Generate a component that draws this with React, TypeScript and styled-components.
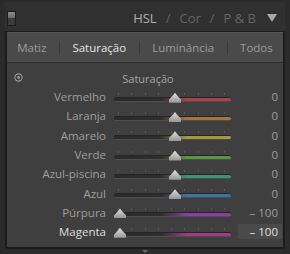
import styled, { createGlobalStyle } from "styled-components";

type rowType = {
  name: string,
  color: string,
  value: number,
  selected?: boolean
}

const rows: rowType[] = [
  { name: "Vermelho", color: "#a8424c", value: 0 },
  { name: "Laranja", color: "#a8743e", value: 0 },
  { name: "Amarelo", color: "#a39a3c", value: 0 },
  { name: "Verde", color: "#5a963e", value: 0 },
  { name: "Azul-piscina", color: "#3a9478", value: 0 },
  { name: "Azul", color: "#3a74a0", value: 0 },
  { name: "Púrpura", color: "#8c3ea0", value: -100 },
  { name: "Magenta", color: "#9c3e80", value: -100, selected: true },
];

const GlobalStyle = createGlobalStyle`
  body {
    margin: 0;
    background: #2b2b2b;
    font-family: "Open Sans", "DejaVu Sans", sans-serif;
  }
`;

const App = () => {
  return (
    <>
      <GlobalStyle />
      <Frame>
        <Header>
          <Switch />
          <Title>
            <Active>HSL</Active>
            <Sep>/</Sep>
            <span>Cor</span>
            <Sep>/</Sep>
            <span>P &amp; B</span>
            <Arrow />
          </Title>
        </Header>
        <Panel>
          <Tabs>
            <Tab>Matiz</Tab>
            <Divider />
            <Tab $active>Saturação</Tab>
            <Divider />
            <Tab>Luminância</Tab>
            <Divider />
            <Tab>Todos</Tab>
          </Tabs>
          <Content>
            <SectionHead>
              <Target>
                <svg width="9" height="9" viewBox="0 0 9 9">
                  <circle cx="4.5" cy="4.5" r="3.6" fill="none" stroke="#9a9a9a" strokeWidth="1.1" />
                  <circle cx="4.5" cy="4.5" r="1.4" fill="#9a9a9a" />
                </svg>
              </Target>
              <SectionTitle>Saturação</SectionTitle>
            </SectionHead>
            {rows.map((row) => (
              <Row key={row.name}>
                <Label $selected={row.selected}>{row.name}</Label>
                <Slider>
                  <Ticks>
                    {Array.from({ length: 9 }).map((_, i) => <Tick key={i} />)}
                  </Ticks>
                  <Track $color={row.color} />
                  <Thumb style={{ left: `${((row.value + 100) / 200) * 110}px` }} />
                </Slider>
                <Value $selected={row.selected}>
                  {row.value < 0 ? `– ${Math.abs(row.value)}` : row.value}
                </Value>
              </Row>
            ))}
          </Content>
        </Panel>
        <Footer>
          <FooterArrow />
        </Footer>
      </Frame>
    </>
  );
};

const Frame = styled.div`
  width: 290px;
  height: 254px;
  background: #2b2b2b;
  display: flex;
  flex-direction: column;
  overflow: hidden;
`;
const Header = styled.div`
  height: 29px;
  margin: 2px 5px 0;
  background: #303030;
  display: flex;
  align-items: center;
  justify-content: space-between;
  padding: 0 8px 0 2px;
`;
const Switch = styled.div`
  width: 7px;
  height: 13px;
  margin-top: 3px;
  border: 1px solid #1c1c1c;
  background: linear-gradient(#8a8a8a 0%, #6c6c6c 45%, #3c3c3c 50%, #3a3a3a 100%);
`;
const Title = styled.div`
  display: flex;
  align-items: center;
  gap: 7px;
  font-size: 13px;
  color: #646464;
  padding-top: 2px;
`;
const Active = styled.span`
  color: #b0b0b0;
`;
const Sep = styled.span`
  margin: 0 2px;
`;
const Arrow = styled.div`
  width: 0;
  height: 0;
  margin-left: 4px;
  border-left: 5px solid transparent;
  border-right: 5px solid transparent;
  border-top: 8px solid #a8a8a8;
`;
const Panel = styled.div`
  margin: 0 5px;
  border: 2px solid #1c1c1c;
  border-top: 1px solid #1c1c1c;
  height: 215px;
  background: #3f3f3f;
  display: flex;
  flex-direction: column;
`;
const Tabs = styled.div`
  height: 29px;
  background: #4a4a4a;
  border-top: 1px solid #555;
  border-bottom: 1px solid #2e2e2e;
  display: flex;
  align-items: center;
  justify-content: space-around;
  padding: 0 4px;
`;
const Tab = styled.div<{ $active?: boolean }>`
  font-size: 11.5px;
  color: ${(p) => (p.$active ? "#e4e4e4" : "#9c9c9c")};
`;
const Divider = styled.div`
  width: 1px;
  height: 14px;
  background: #393939;
`;
const Content = styled.div`
  display: flex;
  flex-direction: column;
  padding-top: 7px;
`;
const SectionHead = styled.div`
  position: relative;
  height: 17px;
  display: flex;
  align-items: center;
  justify-content: center;
`;
const Target = styled.div`
  position: absolute;
  left: 7px;
  top: 3px;
  display: flex;
`;
const SectionTitle = styled.div`
  font-size: 11px;
  color: #a4a4a4;
  margin-left: 6px;
`;
const Row = styled.div`
  height: 19.3px;
  display: flex;
  align-items: center;
`;
const Label = styled.div<{ $selected?: boolean }>`
  width: 99px;
  text-align: right;
  font-size: 11.5px;
  color: ${(p) => (p.$selected ? "#dedede" : "#9e9e9e")};
`;
const Slider = styled.div`
  position: relative;
  width: 117px;
  height: 14px;
  margin-left: 8px;
`;
const Ticks = styled.div`
  position: absolute;
  left: 4px;
  right: 6px;
  top: 3px;
  display: flex;
  justify-content: space-between;
`;
const Tick = styled.div`
  width: 1px;
  height: 2px;
  background: #585858;
`;
const Track = styled.div<{ $color: string }>`
  position: absolute;
  left: 0;
  right: 0;
  top: 8px;
  height: 3px;
  border-radius: 2px;
  background: linear-gradient(to right, #2a2a2a 0%, #2e2e2e 40%, ${(p) => p.$color} 62%, ${(p) => p.$color} 100%);
  box-shadow: 0 -1px 0 #252525, 0 1px 0 #4e4e4e;
`;
const Thumb = styled.div`
  position: absolute;
  top: 3px;
  width: 12px;
  height: 10px;
  background: linear-gradient(#e0e0e0, #959595);
  clip-path: polygon(50% 0%, 70% 30%, 100% 68%, 100% 100%, 0% 100%, 0% 68%, 30% 30%);
`;
const Value = styled.div<{ $selected?: boolean }>`
  width: 40px;
  margin-left: 7px;
  padding-right: 4px;
  text-align: right;
  font-size: 11.5px;
  height: 15px;
  line-height: 15px;
  color: ${(p) => (p.$selected ? "#e0e0e0" : "#9e9e9e")};
  background: ${(p) => (p.$selected ? "#4a4a4a" : "transparent")};
`;
const Footer = styled.div`
  flex: 1;
  display: flex;
  justify-content: center;
  align-items: center;
`;
const FooterArrow = styled.div`
  width: 0;
  height: 0;
  border-left: 3px solid transparent;
  border-right: 3px solid transparent;
  border-top: 3px solid #6a6a6a;
`;

export default App;
